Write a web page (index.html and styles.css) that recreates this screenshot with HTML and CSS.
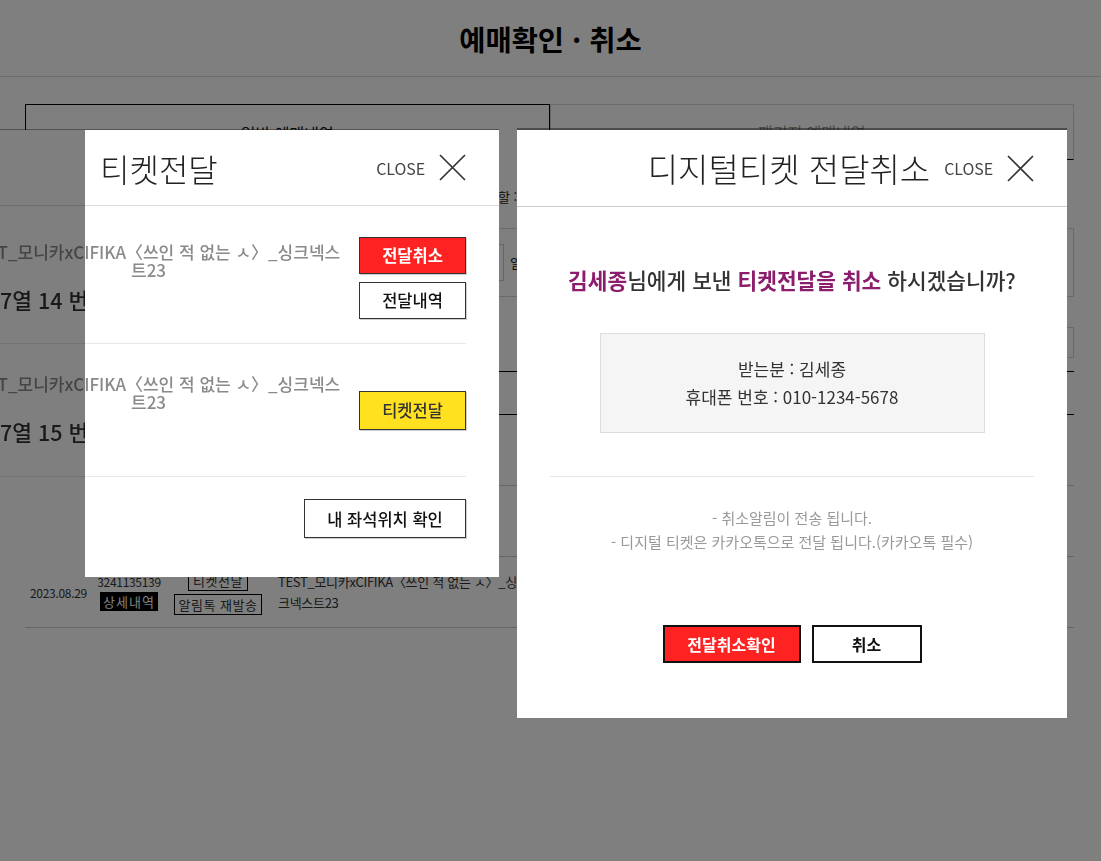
FILE: index.html
```html
<!DOCTYPE html>
<html lang="ko">
<head>
<meta charset="utf-8">
<title>예매확인 · 취소</title>
<link rel="stylesheet" href="styles.css">
</head>
<body>
<div class="page">
  <header class="top">
    <h1 class="top-title">예매확인 · 취소</h1>
  </header>
  <main class="wrap">
    <div class="tabs">
      <div class="tab on">일반 예매내역</div>
      <div class="tab">패키지 예매내역</div>
    </div>
    <p class="guide">조회할 :</p>
    <div class="filter">
      <div class="field"></div>
      <span class="field-unit">일</span>
    </div>
    <div class="sel"></div>
    <div class="tbl">
      <div class="thead"></div>
      <div class="trow-bg"></div>
      <div class="trow-bg"></div>
      <div class="trow-bg data">
        <div class="c-date">2023.08.29</div>
        <div class="c-no">
          <span class="no">3241135139</span>
          <span class="tag-black">상세내역</span>
        </div>
        <div class="c-act">
          <span class="tag-line">티켓전달</span>
          <span class="tag-line">알림톡 재발송</span>
        </div>
        <div class="c-title">TEST_모니카xCIFIKA〈쓰인 적 없는 ㅅ〉_싱크넥스트23</div>
      </div>
    </div>
  </main>
</div>

<div class="dim"></div>

<section class="lmodal">
  <div class="lhead">
    <h2 class="mtitle mtitle-l">티켓전달</h2>
    <div class="close">
      <span class="close-txt">CLOSE</span>
      <svg class="xicon" viewBox="0 0 27 27" aria-hidden="true"><path d="M1 1L26 26M26 1L1 26"/></svg>
    </div>
  </div>
  <div class="lbody">
    <div class="trow first">
      <div class="tinfo">
        <p class="tname">TEST_모니카xCIFIKA〈쓰인 적 없는 ㅅ〉_싱크넥스트23</p>
        <p class="seat">7열 14 번</p>
      </div>
      <div class="tbtns">
        <button class="btn btn-red">전달취소</button>
        <button class="btn">전달내역</button>
      </div>
    </div>
    <div class="trow second">
      <div class="tinfo">
        <p class="tname">TEST_모니카xCIFIKA〈쓰인 적 없는 ㅅ〉_싱크넥스트23</p>
        <p class="seat">7열 15 번</p>
      </div>
      <div class="tbtns">
        <button class="btn btn-yellow">티켓전달</button>
      </div>
    </div>
  </div>
  <div class="lfoot">
    <button class="btn btn-seat">내 좌석위치 확인</button>
  </div>
</section>
<div class="lshade"></div>

<section class="rmodal">
  <div class="rhead">
    <h2 class="mtitle mtitle-r">디지털티켓 전달취소</h2>
    <div class="close">
      <span class="close-txt">CLOSE</span>
      <svg class="xicon" viewBox="0 0 27 27" aria-hidden="true"><path d="M1 1L26 26M26 1L1 26"/></svg>
    </div>
  </div>
  <div class="rbody">
    <p class="question"><strong class="pt">김세종</strong>님에게 보낸 <strong class="pt">티켓전달을 취소</strong> 하시겠습니까?</p>
    <div class="infobox">
      <p>받는분 : 김세종</p>
      <p>휴대폰 번호 : 010-1234-5678</p>
    </div>
    <hr class="sep">
    <div class="notes">
      <p>- 취소알림이 전송 됩니다.</p>
      <p>- 디지털 티켓은 카카오톡으로 전달 됩니다.(카카오톡 필수)</p>
    </div>
    <div class="rbtns">
      <button class="rbtn rbtn-red">전달취소확인</button>
      <button class="rbtn">취소</button>
    </div>
  </div>
</section>
</body>
</html>
```

FILE: styles.css
```css
* { box-sizing: border-box; margin: 0; padding: 0; }

html, body {
  width: 1101px;
  height: 861px;
  overflow: hidden;
}

body {
  position: relative;
  background: #fff;
  color: #222;
  font-family: "Noto Sans CJK KR", "Noto Sans", sans-serif;
}

/* ---------- background page ---------- */
.top {
  height: 77px;
  border-bottom: 1px solid #dcdcdc;
  display: flex;
  align-items: center;
  justify-content: center;
}
.top-title {
  font-size: 28.5px;
  font-weight: 700;
  letter-spacing: 0;
  color: #000;
}

.wrap { padding: 0 27px 0 25px; }

.tabs {
  display: flex;
  margin-top: 27px;
  height: 56px;
}
.tab {
  flex: 1;
  display: flex;
  align-items: center;
  justify-content: center;
  border: 1px solid #d5d5d5;
  border-bottom-color: #000;
  font-size: 16px;
  color: #999;
}
.tab.on {
  border: 1px solid #000;
  border-bottom: none;
  color: #111;
}

.guide {
  margin-top: 28px;
  padding-left: 449px;
  font-size: 13px;
  line-height: 18px;
  color: #222;
}

.filter {
  margin-top: 22px;
  height: 69px;
  border: 1px solid #d5d5d5;
  display: flex;
  align-items: center;
  padding-left: 297px;
}
.field {
  width: 181px;
  height: 37px;
  border: 1px solid #ccc;
}
.field-unit {
  margin-left: 6px;
  font-size: 13px;
  color: #222;
}

.sel {
  margin: 30px 0 0 auto;
  width: 500px;
  height: 31px;
  border: 1px solid #d5d5d5;
}

.tbl { margin-top: 13px; }
.thead {
  height: 44px;
  border-top: 1px solid #000;
  border-bottom: 1px solid #000;
}
.trow-bg {
  height: 71px;
  border-bottom: 1px solid #ccc;
}
.trow-bg.data {
  display: grid;
  grid-template-columns: 67px 74px 104px 250px;
  align-items: center;
  font-size: 12px;
  color: #333;
}
.c-date { text-align: center; letter-spacing: -0.3px; }
.c-no, .c-act {
  display: flex;
  flex-direction: column;
  align-items: center;
  gap: 3px;
}
.no { line-height: 15px; letter-spacing: -0.3px; }
.tag-black {
  background: #000;
  color: #fff;
  font-size: 13px;
  line-height: 19px;
  padding: 0 3px;
  letter-spacing: 1px;
}
.tag-line {
  border: 1px solid #000;
  font-size: 13px;
  line-height: 19px;
  padding: 0 4px;
  letter-spacing: 0.5px;
}
.c-title {
  padding-left: 8px;
  width: 250px;
  font-size: 13px;
  line-height: 21px;
  letter-spacing: -0.3px;
}

/* ---------- dim overlay ---------- */
.dim {
  position: fixed;
  inset: 0;
  background: rgba(0, 0, 0, 0.5);
  z-index: 10;
}

/* ---------- shared modal parts ---------- */
.mtitle {
  font-weight: 300;
  color: #222;
}
.mtitle-l { font-size: 32px; }
.mtitle-r { font-size: 33px; }
.close {
  display: flex;
  align-items: center;
  gap: 14px;
}
.close-txt {
  font-size: 16px;
  color: #444;
  letter-spacing: -0.1px;
}
.xicon {
  width: 27px;
  height: 27px;
  display: block;
}
.xicon path {
  stroke: #333;
  stroke-width: 1.7;
  fill: none;
}

/* ---------- left modal (티켓전달) ---------- */
.lmodal {
  position: absolute;
  top: 130px;
  left: -130px;
  width: 629px;
  height: 447px;
  background: #fff;
  z-index: 20;
  box-shadow: 0 -1px 0 rgba(0, 0, 0, 0.35);
}
.lhead {
  height: 76px;
  border-bottom: 1px solid #ddd;
  display: flex;
  align-items: center;
  justify-content: space-between;
  padding: 0 33px 0 230px;
}
.lbody { padding-right: 33px; }
.trow {
  display: flex;
  align-items: center;
  border-bottom: 1px solid #e8e8e8;
}
.trow.first { height: 138px; padding-top: 6px; }
.trow.second { height: 133px; }
.tinfo {
  flex: 1;
  padding-left: 130px;
}
.tname {
  margin-left: 131px;
  width: 212px;
  text-indent: -164px;
  font-size: 17px;
  line-height: 18px;
  font-weight: 500;
  color: #8a8a8a;
}
.seat {
  margin-top: 8px;
  width: 85px;
  overflow: hidden;
  white-space: nowrap;
  font-size: 21.5px;
  line-height: 26px;
  font-weight: 500;
  color: #333;
}
.tbtns {
  width: 107px;
  display: flex;
  flex-direction: column;
  gap: 8px;
}
.btn {
  height: 37px;
  border: 1px solid #333;
  background: #fff;
  color: #111;
  font-family: inherit;
  font-size: 16.5px;
  font-weight: 500;
  box-shadow: 1px 1px 0 #cfcfcf;
}
.btn-red {
  background: #ff2222;
  color: #fff;
  font-weight: 700;
}
.btn-yellow {
  height: 39px;
  background: #ffe11f;
  color: #333;
}
.lfoot {
  height: 100px;
  display: flex;
  justify-content: flex-end;
  align-items: flex-start;
  padding: 22px 33px 0 0;
}
.btn-seat {
  width: 162px;
  height: 39px;
}
.lshade {
  position: absolute;
  top: 130px;
  left: 0;
  width: 85px;
  height: 447px;
  background: rgba(0, 0, 0, 0.5);
  z-index: 21;
}

/* ---------- right modal (디지털티켓 전달취소) ---------- */
.rmodal {
  position: absolute;
  top: 130px;
  left: 517px;
  width: 550px;
  height: 588px;
  background: #fff;
  z-index: 30;
  box-shadow: 0 -2px 0 rgba(0, 0, 0, 0.4);
}
.rhead {
  height: 77px;
  border-bottom: 1px solid #ccc;
  display: flex;
  align-items: center;
  justify-content: flex-end;
  gap: 14px;
  padding-right: 33px;
}
.rbody {
  display: flex;
  flex-direction: column;
  align-items: center;
}
.question {
  margin-top: 58px;
  font-size: 21.4px;
  line-height: 30px;
  font-weight: 500;
  color: #333;
}
.pt {
  color: #8c1c6c;
  font-weight: 700;
}
.infobox {
  margin-top: 38px;
  width: 385px;
  height: 100px;
  background: #f5f5f5;
  border: 1px solid #ddd;
  display: flex;
  flex-direction: column;
  justify-content: center;
  align-items: center;
  font-size: 17px;
  line-height: 28px;
  color: #333;
}
.sep {
  align-self: stretch;
  margin: 43px 33px 0;
  border: 0;
  border-top: 1px solid #e5e5e5;
}
.notes {
  margin-top: 29px;
  text-align: center;
  font-size: 15px;
  line-height: 24px;
  color: #999;
}
.rbtns {
  margin-top: 71px;
  display: flex;
  gap: 11px;
}
.rbtn {
  width: 110px;
  height: 38px;
  border: 2px solid #111;
  background: #fff;
  color: #111;
  font-family: inherit;
  font-size: 16px;
  font-weight: 700;
}
.rbtn-red {
  width: 138px;
  background: #ff2222;
  color: #fff;
}
```
